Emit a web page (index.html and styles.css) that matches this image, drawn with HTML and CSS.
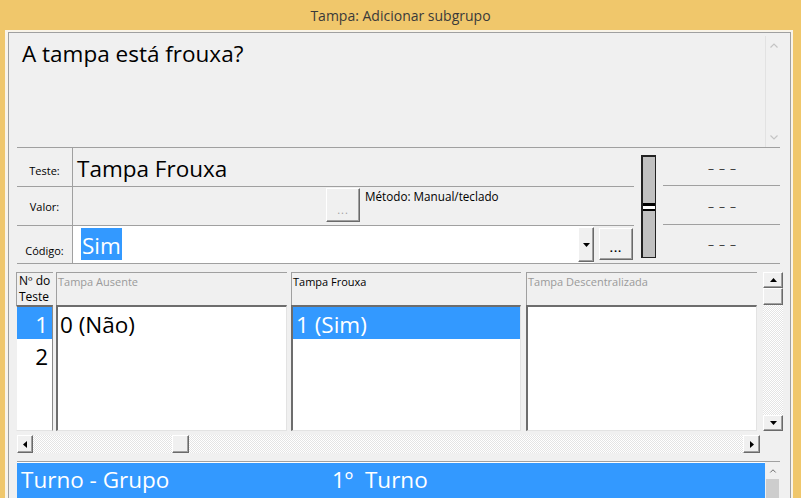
FILE: index.html
```html
<!DOCTYPE html>
<html lang="pt-br">
<head>
  <meta charset="UTF-8">
  <title>Tampa: Adicionar subgrupo</title>
  <link rel="stylesheet" href="styles.css">
</head>
<body>
  <div class="titlebar">Tampa: Adicionar subgrupo</div>

  <div class="client">
    <div class="panel">

      <!-- Pergunta -->
      <div class="question">
        <div class="question-text">A tampa está frouxa?</div>
        <div class="question-scroll">
          <svg width="8" height="5" viewBox="0 0 8 5"><path d="M0.5 4.5 L4 1 L7.5 4.5" fill="none" stroke="#c4c4c4" stroke-width="1.2"/></svg>
          <svg width="8" height="5" viewBox="0 0 8 5"><path d="M0.5 0.5 L4 4 L7.5 0.5" fill="none" stroke="#c4c4c4" stroke-width="1.2"/></svg>
        </div>
      </div>

      <!-- Campos -->
      <div class="fields">
        <div class="fields-main">
          <div class="field-row row-teste">
            <div class="field-label">Teste:</div>
            <div class="field-value teste-value">Tampa Frouxa</div>
          </div>
          <div class="field-row row-valor">
            <div class="field-label">Valor:</div>
            <div class="field-value valor-value">
              <div class="btn dots-btn disabled">...</div>
              <span class="metodo">Método: Manual/teclado</span>
            </div>
          </div>
          <div class="field-row row-codigo">
            <div class="field-label">Código:</div>
            <div class="field-value codigo-value">
              <div class="combo">
                <span class="combo-sel">Sim</span>
                <div class="btn combo-btn">
                  <svg width="7" height="4" viewBox="0 0 7 4"><polygon points="0,0 7,0 3.5,4" fill="#000"/></svg>
                </div>
              </div>
              <div class="btn dots-btn small-dots">...</div>
            </div>
          </div>
        </div>

        <div class="slider-col">
          <div class="slider"><div class="slider-thumb"></div></div>
        </div>

        <div class="fields-side">
          <div class="side-row">–&nbsp;–&nbsp;–</div>
          <div class="side-row">–&nbsp;–&nbsp;–</div>
          <div class="side-row">–&nbsp;–&nbsp;–</div>
        </div>
      </div>

      <!-- Grade de testes -->
      <div class="grid-area">
        <div class="grid-main">
          <div class="col col-num">
            <div class="col-head num-head">Nº do<br>Teste</div>
            <div class="col-body">
              <div class="cell num selected">1</div>
              <div class="cell num">2</div>
            </div>
          </div>
          <div class="col col-b">
            <div class="col-head disabled-text">Tampa Ausente</div>
            <div class="col-body">
              <div class="cell">0 (Não)</div>
            </div>
          </div>
          <div class="col col-c">
            <div class="col-head">Tampa Frouxa</div>
            <div class="col-body">
              <div class="cell selected">1 (Sim)</div>
            </div>
          </div>
          <div class="col col-d">
            <div class="col-head disabled-text">Tampa Descentralizada</div>
            <div class="col-body"></div>
          </div>

          <div class="vscroll">
            <div class="btn sb-btn">
              <svg width="7" height="4" viewBox="0 0 7 4"><polygon points="0,4 7,4 3.5,0" fill="#000"/></svg>
            </div>
            <div class="sb-track vtrack"><div class="btn sb-thumb"></div></div>
            <div class="btn sb-btn">
              <svg width="7" height="4" viewBox="0 0 7 4"><polygon points="0,0 7,0 3.5,4" fill="#000"/></svg>
            </div>
          </div>
        </div>

        <div class="hscroll">
          <div class="btn sb-btn hbtn">
            <svg width="4" height="7" viewBox="0 0 4 7"><polygon points="4,0 4,7 0,3.5" fill="#000"/></svg>
          </div>
          <div class="sb-track htrack"><div class="btn sb-thumb hthumb"></div></div>
          <div class="btn sb-btn hbtn">
            <svg width="4" height="7" viewBox="0 0 4 7"><polygon points="0,0 0,7 4,3.5" fill="#000"/></svg>
          </div>
        </div>
      </div>

      <!-- Turno / grupo -->
      <div class="list">
        <div class="list-body">
          <div class="list-row">
            <span class="list-key">Turno - Grupo</span>
            <span>1º&nbsp;&nbsp;Turno</span>
          </div>
        </div>
        <div class="list-scroll">
          <svg width="8" height="5" viewBox="0 0 8 5"><path d="M0.5 4.5 L4 1 L7.5 4.5" fill="none" stroke="#606060" stroke-width="1.2"/></svg>
          <div class="list-thumb"></div>
        </div>
      </div>

    </div>
  </div>
</body>
</html>
```

FILE: styles.css
```css
body {
  margin: 0;
  width: 801px;
  height: 498px;
  overflow: hidden;
  background: #f0c76b;
  font-family: 'Open Sans', 'Noto Sans', sans-serif;
  color: #000;
}

.titlebar {
  height: 30px;
  display: flex;
  align-items: center;
  justify-content: center;
  font-size: 14px;
  color: #3a3a3a;
}

.client {
  margin: 0 8px 0 5px;
  height: 468px;
  padding: 2px 2px 0 3px;
  box-sizing: border-box;
  background: #f9f4e9;
}

.panel {
  height: 480px;
  border: 1px solid #a0a0a0;
  background: #f0f0f0;
}

/* Pergunta */
.question {
  display: flex;
  height: 111px;
  margin: 3px 9px 0 6px;
}

.question-text {
  flex: 1;
  padding: 5px 0 0 7px;
  font-size: 22.5px;
  line-height: 26px;
  border-right: 1px solid #e2e2e2;
}

.question-scroll {
  width: 15px;
  display: flex;
  flex-direction: column;
  justify-content: space-between;
  align-items: center;
  padding: 7px 0 7px;
}

/* Campos */
.fields {
  display: flex;
  margin: 0 10px 0 8px;
  border-top: 1px solid #a0a0a0;
  border-bottom: 1px solid #a0a0a0;
}

.fields-main {
  width: 617px;
}

.field-row {
  display: flex;
  height: 38px;
  border-bottom: 1px solid #a0a0a0;
}

.field-row.row-codigo {
  height: 37px;
  border-bottom: none;
}

.field-label {
  width: 56px;
  border-right: 1px solid #a0a0a0;
  text-align: center;
  font-size: 11px;
  line-height: 15px;
  padding-top: 15px;
  box-sizing: border-box;
}

.row-valor .field-label {
  padding-top: 12px;
}

.row-codigo .field-label {
  padding-top: 17px;
}

.field-value {
  flex: 1;
  display: flex;
}

.teste-value {
  font-size: 22.5px;
  line-height: 26px;
  padding: 8px 0 0 4px;
}

.btn {
  box-sizing: border-box;
  background: #f0f0f0;
  border: 1px solid;
  border-color: #fff #6a6a6a #6a6a6a #fff;
  box-shadow: inset -1px -1px #a0a0a0;
}

.dots-btn {
  width: 34px;
  height: 34px;
  margin: 1px 0 0 253px;
  display: flex;
  align-items: flex-end;
  justify-content: center;
  font-size: 11px;
  line-height: 11px;
  padding-bottom: 6px;
  letter-spacing: 1px;
}

.dots-btn.disabled {
  color: #a0a0a0;
}

.metodo {
  font-size: 11.7px;
  line-height: 15px;
  margin-left: 5px;
  padding-top: 2px;
}

.codigo-value {
  align-items: flex-start;
}

.combo {
  width: 521px;
  height: 37px;
  background: #fff;
  display: flex;
  justify-content: space-between;
}

.combo-sel {
  margin: 2px 0 0 8px;
  height: 32px;
  box-sizing: border-box;
  padding: 5px 1px 0 1px;
  font-size: 22.5px;
  line-height: 26px;
  background: #3399ff;
  color: #fff;
}

.combo-btn {
  width: 16px;
  margin: 1px 0;
  display: flex;
  align-items: center;
  justify-content: center;
}

.dots-btn.small-dots {
  width: 34px;
  height: 32px;
  margin: 2px 0 0 5px;
  padding-bottom: 6px;
  font-weight: bold;
}

/* Régua */
.slider-col {
  width: 29px;
  padding: 7px 0 0 7px;
  box-sizing: border-box;
}

.slider {
  width: 15px;
  height: 103px;
  box-sizing: border-box;
  background: #c0c0c0;
  border: 1px solid #222;
  border-left-width: 2px;
  border-top-width: 2px;
}

.slider-thumb {
  margin-top: 46px;
  height: 8px;
  box-sizing: border-box;
  background: #fff;
  border-top: 3px solid #000;
  border-bottom: 2px solid #000;
}

.fields-side {
  flex: 1;
}

.side-row {
  height: 38px;
  border-bottom: 1px solid #a0a0a0;
  display: flex;
  align-items: center;
  justify-content: center;
  font-size: 12px;
  color: #404040;
  letter-spacing: 1px;
  padding: 4px 0 0 2px;
  box-sizing: border-box;
}

.side-row:nth-child(2) {
  height: 39px;
  padding-top: 2px;
}

.side-row:last-child {
  height: 37px;
  border-bottom: none;
  padding-top: 1px;
}

/* Grade */
.grid-area {
  margin: 8px 7px 0 7px;
}

.grid-main {
  display: flex;
  height: 159px;
}

.col {
  display: flex;
  flex-direction: column;
}

.col-num { width: 37px; margin-right: 3px; }
.col-b { width: 231px; margin-right: 4px; }
.col-c { width: 230px; margin-right: 5px; }
.col-d { width: 231px; margin-right: 6px; }

.col-head {
  height: 33px;
  box-sizing: border-box;
  border-top: 1px solid #a0a0a0;
  border-left: 1px solid #a0a0a0;
  font-size: 11px;
  line-height: 15px;
  padding: 1px 0 0 1px;
}

.num-head {
  font-size: 12px;
  line-height: 16px;
  padding: 0 0 0 2px;
}

.disabled-text {
  color: #9a9a9a;
}

.col-body {
  flex: 1;
  background: #fff;
  border-top: 2px solid #6d6d6d;
  border-left: 2px solid #6d6d6d;
  border-bottom: 1px solid #e3e3e3;
  border-right: 1px solid #e3e3e3;
}

.col-num .col-body {
  border-left: 1px solid #f0f0f0;
  border-right: 1px solid #8a8a8a;
}

.cell {
  height: 32px;
  box-sizing: border-box;
  padding: 5px 0 0 2px;
  font-size: 22.5px;
  line-height: 26px;
}

.cell.num {
  text-align: right;
  padding: 5px 4px 0 0;
}

.col-c .cell {
  padding-left: 3px;
}

.cell.selected {
  background: #3399ff;
  color: #fff;
}

/* Barras de rolagem */
.vscroll {
  width: 20px;
  display: flex;
  flex-direction: column;
}

.sb-btn {
  height: 16px;
  display: flex;
  align-items: center;
  justify-content: center;
}

.sb-track {
  flex: 1;
  background: repeating-conic-gradient(#ffffff 0 25%, #e4e4e4 0 50%) 0 0 / 2px 2px;
}

.sb-thumb {
  height: 17px;
}

.hscroll {
  display: flex;
  height: 18px;
  width: 743px;
  margin: 4px 0 0 1px;
}

.hbtn {
  width: 16px;
  height: 18px;
}

.hbtn:last-child {
  width: 17px;
}

.htrack {
  display: flex;
}

.hthumb {
  width: 17px;
  height: 18px;
  margin-left: 139px;
}

/* Lista turno */
.list {
  display: flex;
  margin: 8px 10px 0 8px;
  height: 40px;
  border-top: 1px solid #a0a0a0;
  background: #fff;
}

.list-body {
  flex: 1;
  padding-top: 1px;
}

.list-row {
  display: flex;
  height: 40px;
  background: #3399ff;
  color: #fff;
  font-size: 22.5px;
  line-height: 26px;
  padding: 4px 0 0 4px;
  box-sizing: border-box;
}

.list-key {
  width: 311px;
}

.list-scroll {
  width: 15px;
  display: flex;
  flex-direction: column;
  align-items: center;
  padding-top: 7px;
  background: #f0f0f0;
}

.list-thumb {
  width: 13px;
  height: 30px;
  margin-top: 6px;
  background: #cdcdcd;
}
```
